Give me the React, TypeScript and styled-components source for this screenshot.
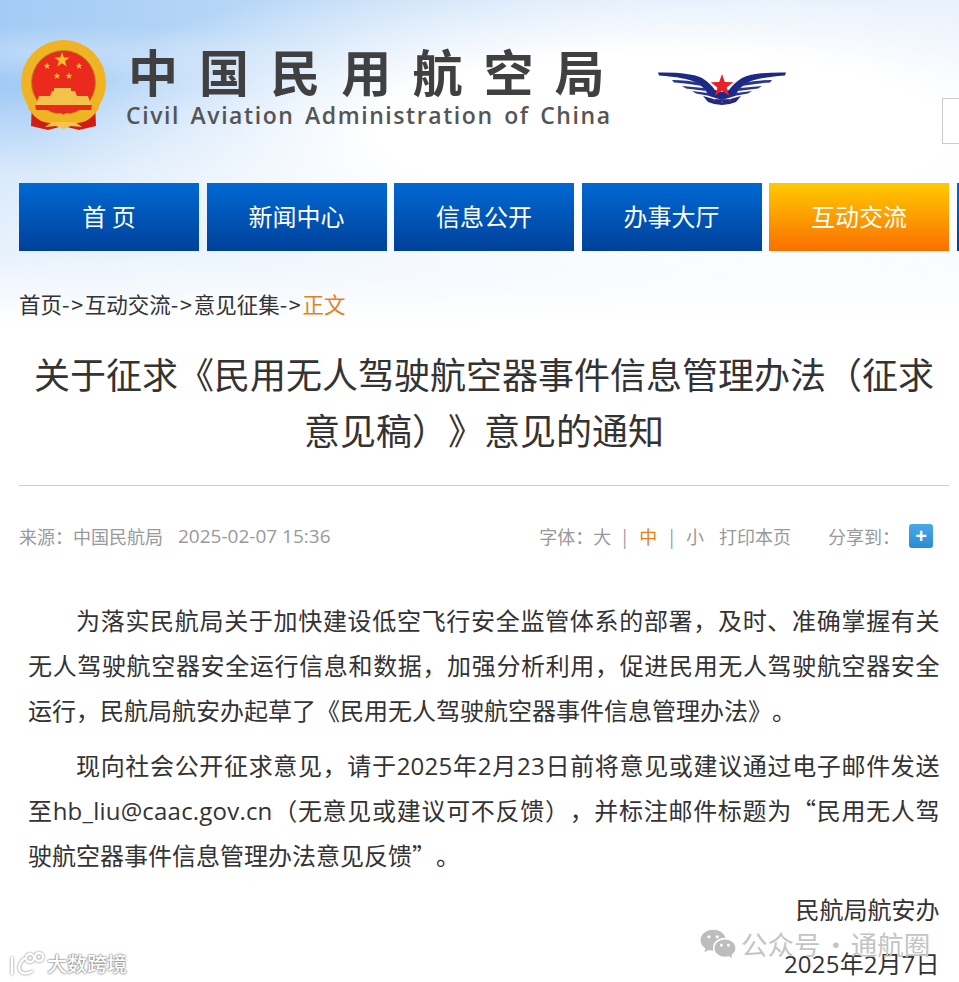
import React from "react";
import styled, { createGlobalStyle } from "styled-components";
import { RiWechatFill } from "react-icons/ri";

const COMMA = "\uFF0C";
const COLON = "\uFF1A";
const LP = "\uFF08";
const RP = "\uFF09";

const Global = createGlobalStyle`
  html, body { margin: 0; padding: 0; background: #fff; overflow: hidden; }
  body { font-family: "Noto Sans CJK SC", "Open Sans", sans-serif; text-spacing-trim: space-all; }
`;

const Page = styled.div`
  position: relative;
  width: 959px;
  height: 982px;
  overflow: hidden;
  box-sizing: border-box;
  background:
    radial-gradient(ellipse 260px 28px at 60px 52px, rgba(255,255,255,.28), transparent),
    radial-gradient(ellipse 620px 170px at 660px 130px, #ffffff 45%, rgba(255,255,255,0)),
    linear-gradient(180deg, rgba(255,255,255,0) 90px, rgba(255,255,255,.6) 175px, rgba(255,255,255,.75) 255px, #fff 325px),
    linear-gradient(90deg, #a3cbf5 0, #bcd9f8 300px, #d5e6fa 620px, #e3eefb 959px),
    #fff;
`;

const Header = styled.header`
  display: flex;
  align-items: flex-start;
  height: 183px;
  box-sizing: border-box;
  padding: 40px 0 0 21px;
`;

const Emblem = styled.svg`
  flex: none;
  width: 85px;
  height: 90px;
`;

const Brand = styled.div`
  flex: none;
  width: 500px;
  margin: -2px 0 0 20px;
  display: flex;
  flex-direction: column;
`;

const BrandCn = styled.div`
  font-size: 50px;
  line-height: 64px;
  font-weight: 700;
  letter-spacing: 21.1px;
  color: #404040;
  padding-left: 2px;
  white-space: nowrap;
`;

const BrandEn = styled.div`
  font-family: "Open Sans", sans-serif;
  font-size: 23px;
  line-height: 30px;
  margin-top: -2px;
  font-weight: 600;
  letter-spacing: 1.57px;
  word-spacing: 3px;
  color: #555;
  white-space: nowrap;
`;

const Wings = styled.svg`
  flex: none;
  width: 128px;
  height: 34px;
  margin: 32px 0 0 32px;
`;

const SearchBox = styled.div`
  flex: none;
  width: 100px;
  height: 46px;
  box-sizing: border-box;
  margin: 58px 0 0 156px;
  border: 1px solid #ccc;
  background: #fff;
`;

const Nav = styled.nav`
  display: flex;
  gap: 7.5px;
  padding-left: 19px;
  height: 68px;
`;

const Tab = styled.a<{ $active?: boolean }>`
  flex: none;
  width: 180px;
  height: 68px;
  box-sizing: border-box;
  padding-bottom: 3px;
  display: flex;
  align-items: center;
  justify-content: center;
  font-size: 24px;
  color: #fff;
  white-space: pre;
  background: ${(p) =>
    p.$active
      ? "linear-gradient(180deg, #ffca00 0%, #f96f00 100%)"
      : "linear-gradient(180deg, #0069d3 0%, #00419a 100%)"};
`;

const Crumbs = styled.div`
  margin: 36px 0 0 19px;
  height: 34px;
  font-size: 21.5px;
  line-height: 34px;
  color: #333;
  white-space: nowrap;
`;

const CrumbSep = styled.span`
  letter-spacing: 1.7px;
`;

const CrumbNow = styled.span`
  color: #e8801a;
`;

const Title = styled.h1`
  margin: 24px 10px 0 19px;
  padding: 0 0 28px;
  border-bottom: 1px solid #ccc;
  font-size: 36px;
  line-height: 56px;
  font-weight: 400;
  color: #333;
  text-align: center;
`;

const Meta = styled.div`
  display: flex;
  align-items: center;
  justify-content: space-between;
  height: 36px;
  margin: 32px 26px 0 19px;
  font-size: 18px;
  color: #999;
  white-space: pre;
`;

const MetaGroup = styled.div`
  display: flex;
  align-items: center;
`;

const MetaDate = styled.span`
  margin-left: 15px;
  font-family: "Open Sans", sans-serif;
  font-size: 19px;
`;

const MetaItem = styled.span<{ $on?: boolean; $left?: number }>`
  margin-left: ${(p) => p.$left ?? 0}px;
  color: ${(p) => (p.$on ? "#e8801a" : "#999")};
`;

const Share = styled.span`
  margin-left: 9px;
  width: 24px;
  height: 24px;
  border-radius: 3px;
  background: linear-gradient(180deg, #4aa8e6, #2a8bd6);
  color: #fff;
  display: flex;
  align-items: center;
  justify-content: center;
  font: 700 20px/24px "Liberation Sans", sans-serif;
`;

const Article = styled.article`
  margin: 43px 19.5px 0 28px;
  font-size: 24px;
  line-height: 45px;
  color: #333;
`;

const Para = styled.p`
  margin: 0 0 10px;
  text-indent: 48px;
  text-align: justify;
`;

const Latin = styled.span`
  font-family: "Open Sans", sans-serif;
  line-height: 1;
  letter-spacing: 0.2px;
`;

const Sign = styled.p<{ $top?: number }>`
  margin: ${(p) => p.$top ?? 0}px 0 0;
  text-align: right;
  line-height: 54px;
  height: 54px;
`;

const MarkLeft = styled.div`
  position: absolute;
  left: 8px;
  top: 949px;
  display: flex;
  align-items: center;
  gap: 1px;
  font-size: 20px;
  font-weight: 500;
  color: #fff;
  text-shadow: 0 0 2px #777, 0 0 2px #777;
`;

const MarkRight = styled.div`
  position: absolute;
  left: 699px;
  top: 925px;
  display: flex;
  align-items: center;
  gap: 4px;
  font-size: 26.5px;
  line-height: 36px;
  word-spacing: -4px;
  color: #c4c4c4;
  white-space: pre;
`;

const star = (cx: number, cy: number, r: number) => {
  const pts: string[] = [];
  for (let i = 0; i < 10; i++) {
    const a = -Math.PI / 2 + (i * Math.PI) / 5;
    const q = i % 2 ? r * 0.4 : r;
    pts.push(`${(cx + q * Math.cos(a)).toFixed(1)},${(cy + q * Math.sin(a)).toFixed(1)}`);
  }
  return pts.join(" ");
};

export default function App() {
  return (
    <Page>
      <Global />
      <Header>
        <Emblem viewBox="0 0 85 90">
          <path d="M11 62 L10 86 L27 90 L42 86 L58 90 L75 86 L74 62 Z" fill="#cf1d16" />
          <circle cx="42.5" cy="42.5" r="42.5" fill="#f0b323" />
          <circle cx="42.5" cy="42.5" r="32" fill="#e92a1c" stroke="#b98a22" strokeWidth="1" />
          <polygon points={star(41, 20, 8)} fill="#f6c02c" />
          <polygon points={star(26, 26, 3.6)} fill="#f6c02c" />
          <polygon points={star(58, 26, 3.6)} fill="#f6c02c" />
          <polygon points={star(36, 36, 3.6)} fill="#f6c02c" />
          <polygon points={star(48, 36, 3.6)} fill="#f6c02c" />
          <path d="M33 48 H50 V51 H54 L56 56 H67 L70 65 H15 L18 56 H29 L31 51 H33 Z" fill="#f3c24a" />
          <path d="M14 65 H71 L70 70 H15 Z" fill="#e92a1c" />
          <path d="M9 62 Q18 78 31 78 Q38 70 42.5 75 Q47 70 54 78 Q67 78 76 62 L78 68 Q68 84 54 83 H31 Q17 84 7 68 Z" fill="#f0b323" />
          <path d="M24 87 L31 82 H54 L61 87 L50 86 L42.5 89 L35 86 Z" fill="#f6c44a" />
        </Emblem>
        <Brand>
          <BrandCn>中国民用航空局</BrandCn>
          <BrandEn>Civil Aviation Administration of China</BrandEn>
        </Brand>
        <Wings viewBox="0 0 128 34">
          <path d="M0 0.5 Q32 0 44 6 Q52 11 57 18 L64 20 L71 18 Q76 11 84 6 Q96 0 128 0.5 L127 3.5 Q100 5.5 91 10 Q82 14 77 24 L64 28 L51 24 Q46 14 37 10 Q28 5.5 1 3.5 Z" fill="#1c2a86" />
          <path d="M14 8 Q30 8 42 11 L44 14 Q28 11 16 10.5 Z M114 8 Q98 8 86 11 L84 14 Q100 11 112 10.5 Z M24 14 L46 16 L48 19 L28 16.5 Z M104 14 L82 16 L80 19 L100 16.5 Z M34 19 L50 21 L52 24 L38 21.5 Z M94 19 L78 21 L76 24 L90 21.5 Z" fill="#27358f" />
          <path d="M45 24 Q64 31 83 24 L78 30 Q64 36 50 30 Z" fill="#1c2a86" />
          <polygon points={star(64, 14, 12)} fill="#e8202a" />
          <circle cx="56" cy="28" r="1" fill="#e8202a" />
          <circle cx="64" cy="30" r="1" fill="#e8202a" />
          <circle cx="72" cy="28" r="1" fill="#e8202a" />
        </Wings>
        <SearchBox />
      </Header>

      <Nav>
        <Tab>首 页</Tab>
        <Tab>新闻中心</Tab>
        <Tab>信息公开</Tab>
        <Tab>办事大厅</Tab>
        <Tab $active>互动交流</Tab>
        <Tab />
      </Nav>

      <Crumbs>
        首页<CrumbSep>-&gt;</CrumbSep>互动交流<CrumbSep>-&gt;</CrumbSep>意见征集<CrumbSep>-&gt;</CrumbSep><CrumbNow>正文</CrumbNow>
      </Crumbs>

      <Title>关于征求《民用无人驾驶航空器事件信息管理办法{LP}征求意见稿{RP}》意见的通知</Title>

      <Meta>
        <MetaGroup>
          <span>来源{COLON}中国民航局</span>
          <MetaDate>2025-02-07 15:36</MetaDate>
        </MetaGroup>
        <MetaGroup>
          <MetaItem>字体{COLON}大</MetaItem>
          <MetaItem $left={11}>|</MetaItem>
          <MetaItem $on $left={12}>中</MetaItem>
          <MetaItem $left={12}>|</MetaItem>
          <MetaItem $left={12}>小</MetaItem>
          <MetaItem $left={15}>打印本页</MetaItem>
          <MetaItem $left={37}>分享到{COLON}</MetaItem>
          <Share>+</Share>
        </MetaGroup>
      </Meta>

      <Article>
        <Para>为落实民航局关于加快建设低空飞行安全监管体系的部署{COMMA}及时、准确掌握有关无人驾驶航空器安全运行信息和数据{COMMA}加强分析利用{COMMA}促进民用无人驾驶航空器安全运行{COMMA}民航局航安办起草了《民用无人驾驶航空器事件信息管理办法》。</Para>
        <Para>现向社会公开征求意见{COMMA}请于<Latin>2025</Latin>年<Latin>2</Latin>月<Latin>23</Latin>日前将意见或建议通过电子邮件发送至<Latin>hb_liu@caac.gov.cn</Latin>{LP}无意见或建议可不反馈{RP}{COMMA}并标注邮件标题为“民用无人驾驶航空器事件信息管理办法意见反馈”。</Para>
        <Sign $top={-5.5}>民航局航安办</Sign>
        <Sign><Latin>2025</Latin>年<Latin>2</Latin>月<Latin>7</Latin>日</Sign>
      </Article>

      <MarkRight>
        <RiWechatFill size={38} color="#bdbdbd" />
        <span>公众号 · 通航圈</span>
      </MarkRight>
      <MarkLeft>
        <svg width="38" height="28" viewBox="0 0 38 28" fill="none" stroke="#fff" strokeWidth="2.4" style={{ filter: "drop-shadow(0 0 1px #777)" }}>
          <path d="M4 7 V25 M17 8 Q9 14 12 21 Q16 26 25 21" />
          <circle cx="22" cy="8" r="4" />
          <circle cx="31" cy="7" r="4" />
        </svg>
        <span>大数跨境</span>
      </MarkLeft>
    </Page>
  );
}
